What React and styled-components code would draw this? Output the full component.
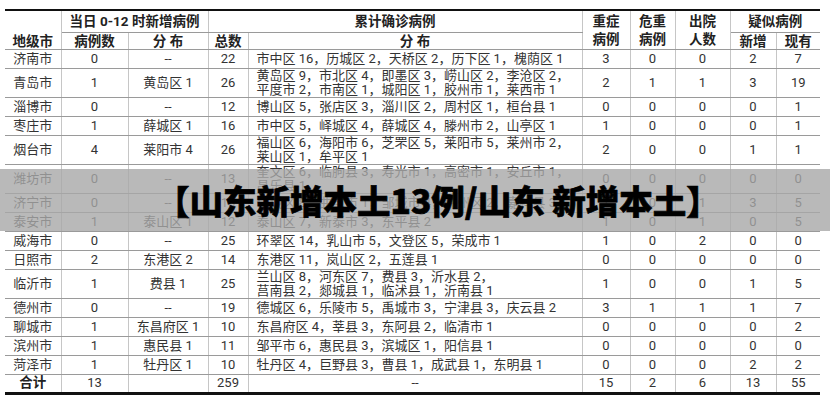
import React from "react";
import styled, { createGlobalStyle } from "styled-components";

const Global = createGlobalStyle`
  html, body { margin: 0; padding: 0; background: #fff; }
  body { font-family: "Roboto", "Noto Sans CJK SC", sans-serif; }
`;

const Page = styled.div`
  position: relative;
  width: 830px;
  height: 400px;
  overflow: hidden;
  background: #fff;
  padding: 9px 0 0 5px;
  box-sizing: border-box;
`;

const Table = styled.table`
  width: 815px;
  table-layout: fixed;
  border-collapse: collapse;
  border-top: 2px solid #111;
  border-bottom: 3px solid #111;
  color: #333;
  font-size: 13px;
`;

const HeadRow = styled.tr`
  height: ${(p) => p.$h}px;
`;

const Th = styled.th`
  padding: 0;
  font-weight: 700;
  font-size: 13.5px;
  color: #222;
  line-height: ${(p) => (p.$lh ? p.$lh : 16)}px;
  text-align: center;
  vertical-align: ${(p) => p.$va || "middle"};
  border-right: 1px solid #c6c6c6;
  border-bottom: 1px solid #9a9a9a;
  white-space: pre-line;
  &:last-child { border-right: none; }
`;

const Row = styled.tr`
  height: ${(p) => (p.$double ? 29 : 19)}px;
`;

const Td = styled.td`
  padding: ${(p) => (p.$left ? "0 2px 0 8px" : "0")};
  text-align: ${(p) => (p.$left ? "left" : "center")};
  font-weight: ${(p) => (p.$bold ? 700 : 400)};
  font-size: ${(p) => (p.$bold ? "13.5px" : "13px")};
  color: ${(p) => (p.$bold ? "#222" : "#333")};
  line-height: 13.5px;
  white-space: pre-line;
  vertical-align: middle;
  border-right: 1px solid #c6c6c6;
  border-bottom: 1px solid #9a9a9a;
  &:last-child { border-right: none; }
`;

const Band = styled.div`
  position: absolute;
  left: 0;
  right: 0;
  top: 169px;
  height: 62px;
  background: rgba(167, 167, 167, 0.8);
  display: flex;
  align-items: center;
  padding-left: 156px;
  box-sizing: border-box;
`;

const Title = styled.div`
  font-family: "Noto Sans CJK SC", sans-serif;
  font-weight: 900;
  font-size: 33.5px;
  color: #000;
  -webkit-text-stroke: 0.7px #000;
  line-height: 1;
  white-space: nowrap;
`;

const widths = [56, 67, 80, 40, 334, 48, 45, 55, 46, 44];

const rows = [
  ["济南市", "0", "--", "22", "市中区 16，历城区 2，天桥区 2，历下区 1，槐荫区 1", "3", "0", "0", "2", "7"],
  ["青岛市", "1", "黄岛区 1", "26", "黄岛区 9，市北区 4，即墨区 3，崂山区 2，李沧区 2，\n平度市 2，市南区 1，城阳区 1，胶州市 1，莱西市 1", "2", "1", "1", "3", "19"],
  ["淄博市", "0", "--", "12", "博山区 5，张店区 3，淄川区 2，周村区 1，桓台县 1", "0", "0", "0", "0", "1"],
  ["枣庄市", "1", "薛城区 1", "16", "市中区 5，峄城区 4，薛城区 4，滕州市 2，山亭区 1", "1", "0", "0", "0", "1"],
  ["烟台市", "4", "莱阳市 4", "26", "福山区 6，海阳市 6，芝罘区 5，莱阳市 5，莱州市 2，\n莱山区 1，牟平区 1", "2", "0", "0", "1", "1"],
  ["潍坊市", "0", "--", "13", "奎文区 6，临朐县 3，寿光市 1，高密市 1，安丘市 1，\n昌乐县 1", "0", "0", "0", "0", "0"],
  ["济宁市", "0", "--", "18", "任城区 8，曲阜市 1，邹城市 4，兖州区 2，嘉祥县 3", "1", "0", "1", "3", "5"],
  ["泰安市", "1", "泰山区 1", "12", "泰山区 7，新泰市 3，东平县 2", "1", "0", "1", "0", "5"],
  ["威海市", "0", "--", "25", "环翠区 14，乳山市 5，文登区 5，荣成市 1", "1", "0", "2", "0", "0"],
  ["日照市", "2", "东港区 2", "14", "东港区 11，岚山区 2，五莲县 1", "0", "0", "0", "0", "0"],
  ["临沂市", "1", "费县 1", "25", "兰山区 8，河东区 7，费县 3，沂水县 2，\n莒南县 2，郯城县 1，临沭县 1，沂南县 1", "1", "0", "0", "1", "5"],
  ["德州市", "0", "--", "19", "德城区 6，乐陵市 5，禹城市 3，宁津县 3，庆云县 2", "3", "1", "1", "1", "7"],
  ["聊城市", "1", "东昌府区 1", "10", "东昌府区 4，莘县 3，东阿县 2，临清市 1", "0", "0", "0", "0", "2"],
  ["滨州市", "1", "惠民县 1", "11", "邹平市 6，惠民县 3，滨城区 1，阳信县 1", "0", "0", "0", "0", "0"],
  ["菏泽市", "1", "牡丹区 1", "10", "牡丹区 4，巨野县 3，曹县 1，成武县 1，东明县 1", "0", "0", "0", "2", "2"],
];

const total = ["合计", "13", "", "259", "--", "15", "2", "6", "13", "55"];

export default function App() {
  return (
    <>
      <Global />
      <Page>
        <Table>
          <colgroup>
            {widths.map((w, i) => (
              <col key={i} style={{ width: w }} />
            ))}
          </colgroup>
          <thead>
            <HeadRow $h={22}>
              <Th rowSpan={2} $va="bottom">地级市</Th>
              <Th colSpan={2}>当日 0-12 时新增病例</Th>
              <Th colSpan={2}>累计确诊病例</Th>
              <Th rowSpan={2} $lh={18}>{"重症\n病例"}</Th>
              <Th rowSpan={2} $lh={18}>{"危重\n病例"}</Th>
              <Th rowSpan={2} $lh={18}>{"出院\n人数"}</Th>
              <Th colSpan={2}>疑似病例</Th>
            </HeadRow>
            <HeadRow $h={16}>
              <Th>病例数</Th>
              <Th>分 布</Th>
              <Th>总数</Th>
              <Th>分 布</Th>
              <Th>新增</Th>
              <Th>现有</Th>
            </HeadRow>
          </thead>
          <tbody>
            {rows.map((r) => (
              <Row key={r[0]} $double={r[4].includes("\n")}>
                {r.map((c, i) => (
                  <Td key={i} $left={i === 4}>
                    {c}
                  </Td>
                ))}
              </Row>
            ))}
            <Row>
              {total.map((c, i) => (
                <Td key={i} $bold={i === 0}>
                  {c}
                </Td>
              ))}
            </Row>
          </tbody>
        </Table>
        <Band>
          <Title>【山东新增本土13例/山东 新增本土】</Title>
        </Band>
      </Page>
    </>
  );
}
